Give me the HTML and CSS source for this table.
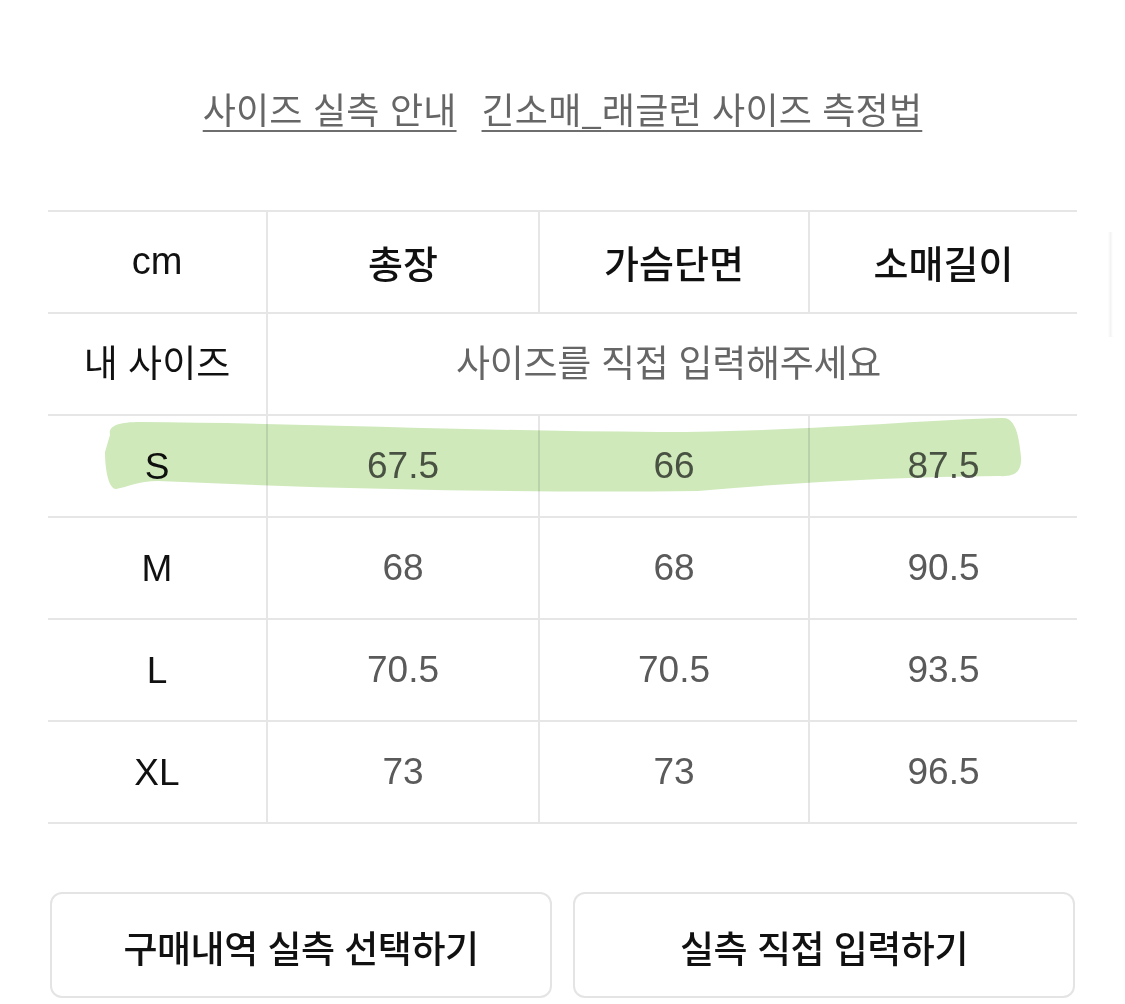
FILE: index.html
```html
<!DOCTYPE html>
<html lang="ko">
<head>
<meta charset="utf-8">
<title>사이즈 실측</title>
<link rel="stylesheet" href="styles.css">
</head>
<body>
<div class="page">
  <nav class="links">
    <a class="link" href="#">사이즈 실측 안내</a>
    <a class="link" href="#">긴소매_래글런 사이즈 측정법</a>
  </nav>

  <div class="table-wrap">
    <div class="size-table">
      <div class="cell head first">cm</div>
      <div class="cell head">총장</div>
      <div class="cell head">가슴단면</div>
      <div class="cell head">소매길이</div>

      <div class="cell label first">내 사이즈</div>
      <div class="cell placeholder span3">사이즈를 직접 입력해주세요</div>

      <div class="cell label first">S</div>
      <div class="cell val">67.5</div>
      <div class="cell val">66</div>
      <div class="cell val">87.5</div>

      <div class="cell label first">M</div>
      <div class="cell val">68</div>
      <div class="cell val">68</div>
      <div class="cell val">90.5</div>

      <div class="cell label first">L</div>
      <div class="cell val">70.5</div>
      <div class="cell val">70.5</div>
      <div class="cell val">93.5</div>

      <div class="cell label first">XL</div>
      <div class="cell val">73</div>
      <div class="cell val">73</div>
      <div class="cell val">96.5</div>
    </div>
    <svg class="highlight" width="940" height="90" viewBox="0 0 940 90" aria-hidden="true">
      <path d="M12 18 C 10 9, 20 5, 42 5 C 200 6, 380 14, 560 15 C 700 15, 820 3, 905 1 C 918 1, 921 20, 923 40 C 924 56, 916 60, 900 59 C 800 60, 700 65, 600 74 C 420 76, 240 72, 60 64 C 40 64, 30 70, 18 72 C 10 72, 7 50, 7 35 Z" fill="#cfe9bb"/>
    </svg>
  </div>

  <div class="edge-shadow"></div>

  <div class="actions">
    <button class="btn" type="button">구매내역 실측 선택하기</button>
    <button class="btn" type="button">실측 직접 입력하기</button>
  </div>
</div>
</body>
</html>
```

FILE: styles.css
```css
* { box-sizing: border-box; }

html, body {
  margin: 0;
  padding: 0;
  background: #ffffff;
}

body {
  font-family: "Liberation Sans", "Noto Sans CJK KR", sans-serif;
  color: #111;
}

.page {
  position: relative;
  width: 1125px;
  height: 1004px;
  overflow: hidden;
  padding-top: 83px;
}

.links {
  display: flex;
  justify-content: center;
  gap: 25px;
  height: 127px;
  padding-left: 0;
}

.link {
  font-family: "Noto Sans CJK KR", sans-serif;
  font-size: 36px;
  line-height: 50px;
  letter-spacing: 0.2px;
  color: #666;
  text-decoration: underline;
  text-decoration-color: #6e6e6e;
  text-decoration-thickness: 2px;
  text-underline-offset: 6px;
  height: 50px;
}

.table-wrap {
  position: relative;
  margin-left: 48px;
  width: 1029px;
}

.size-table {
  display: grid;
  grid-template-columns: 218px 272px 270px 269px;
  grid-auto-rows: 102px;
  border-top: 2px solid #e6e6e6;
}

.cell {
  display: flex;
  align-items: center;
  justify-content: center;
  border-bottom: 2px solid #e6e6e6;
  border-left: 2px solid #e6e6e6;
  font-size: 37px;
  position: relative;
  z-index: 2;
}

.cell.first { border-left: none; }

.head {
  font-weight: 500;
  font-size: 38px;
  color: #111;
  padding-bottom: 2px;
}

.label {
  color: #111;
  padding-top: 2px;
}

.val {
  color: #5a5a5a;
  padding-top: 0;
}

.placeholder {
  grid-column: span 3;
  color: #666;
  letter-spacing: -0.3px;
  padding-bottom: 6px;
  padding-right: 8px;
}

.label.first:nth-child(5) {
  padding-top: 0;
  padding-bottom: 6px;
}

.highlight {
  position: absolute;
  left: 50px;
  top: 207px;
  z-index: 3;
  mix-blend-mode: multiply;
  pointer-events: none;
}

.edge-shadow {
  position: absolute;
  left: 1108px;
  top: 232px;
  width: 5px;
  height: 105px;
  background: linear-gradient(to right, #ffffff, #f3f3f3, #ffffff);
}

.actions {
  display: flex;
  gap: 21px;
  margin-left: 50px;
  margin-top: 68px;
}

.btn {
  width: 502px;
  height: 106px;
  background: #fff;
  border: 2px solid #e4e4e4;
  border-radius: 12px;
  font-family: "Liberation Sans", "Noto Sans CJK KR", sans-serif;
  font-size: 37px;
  font-weight: 500;
  color: #111;
  padding: 4px 0 0 0;
  letter-spacing: -0.5px;
}
```
